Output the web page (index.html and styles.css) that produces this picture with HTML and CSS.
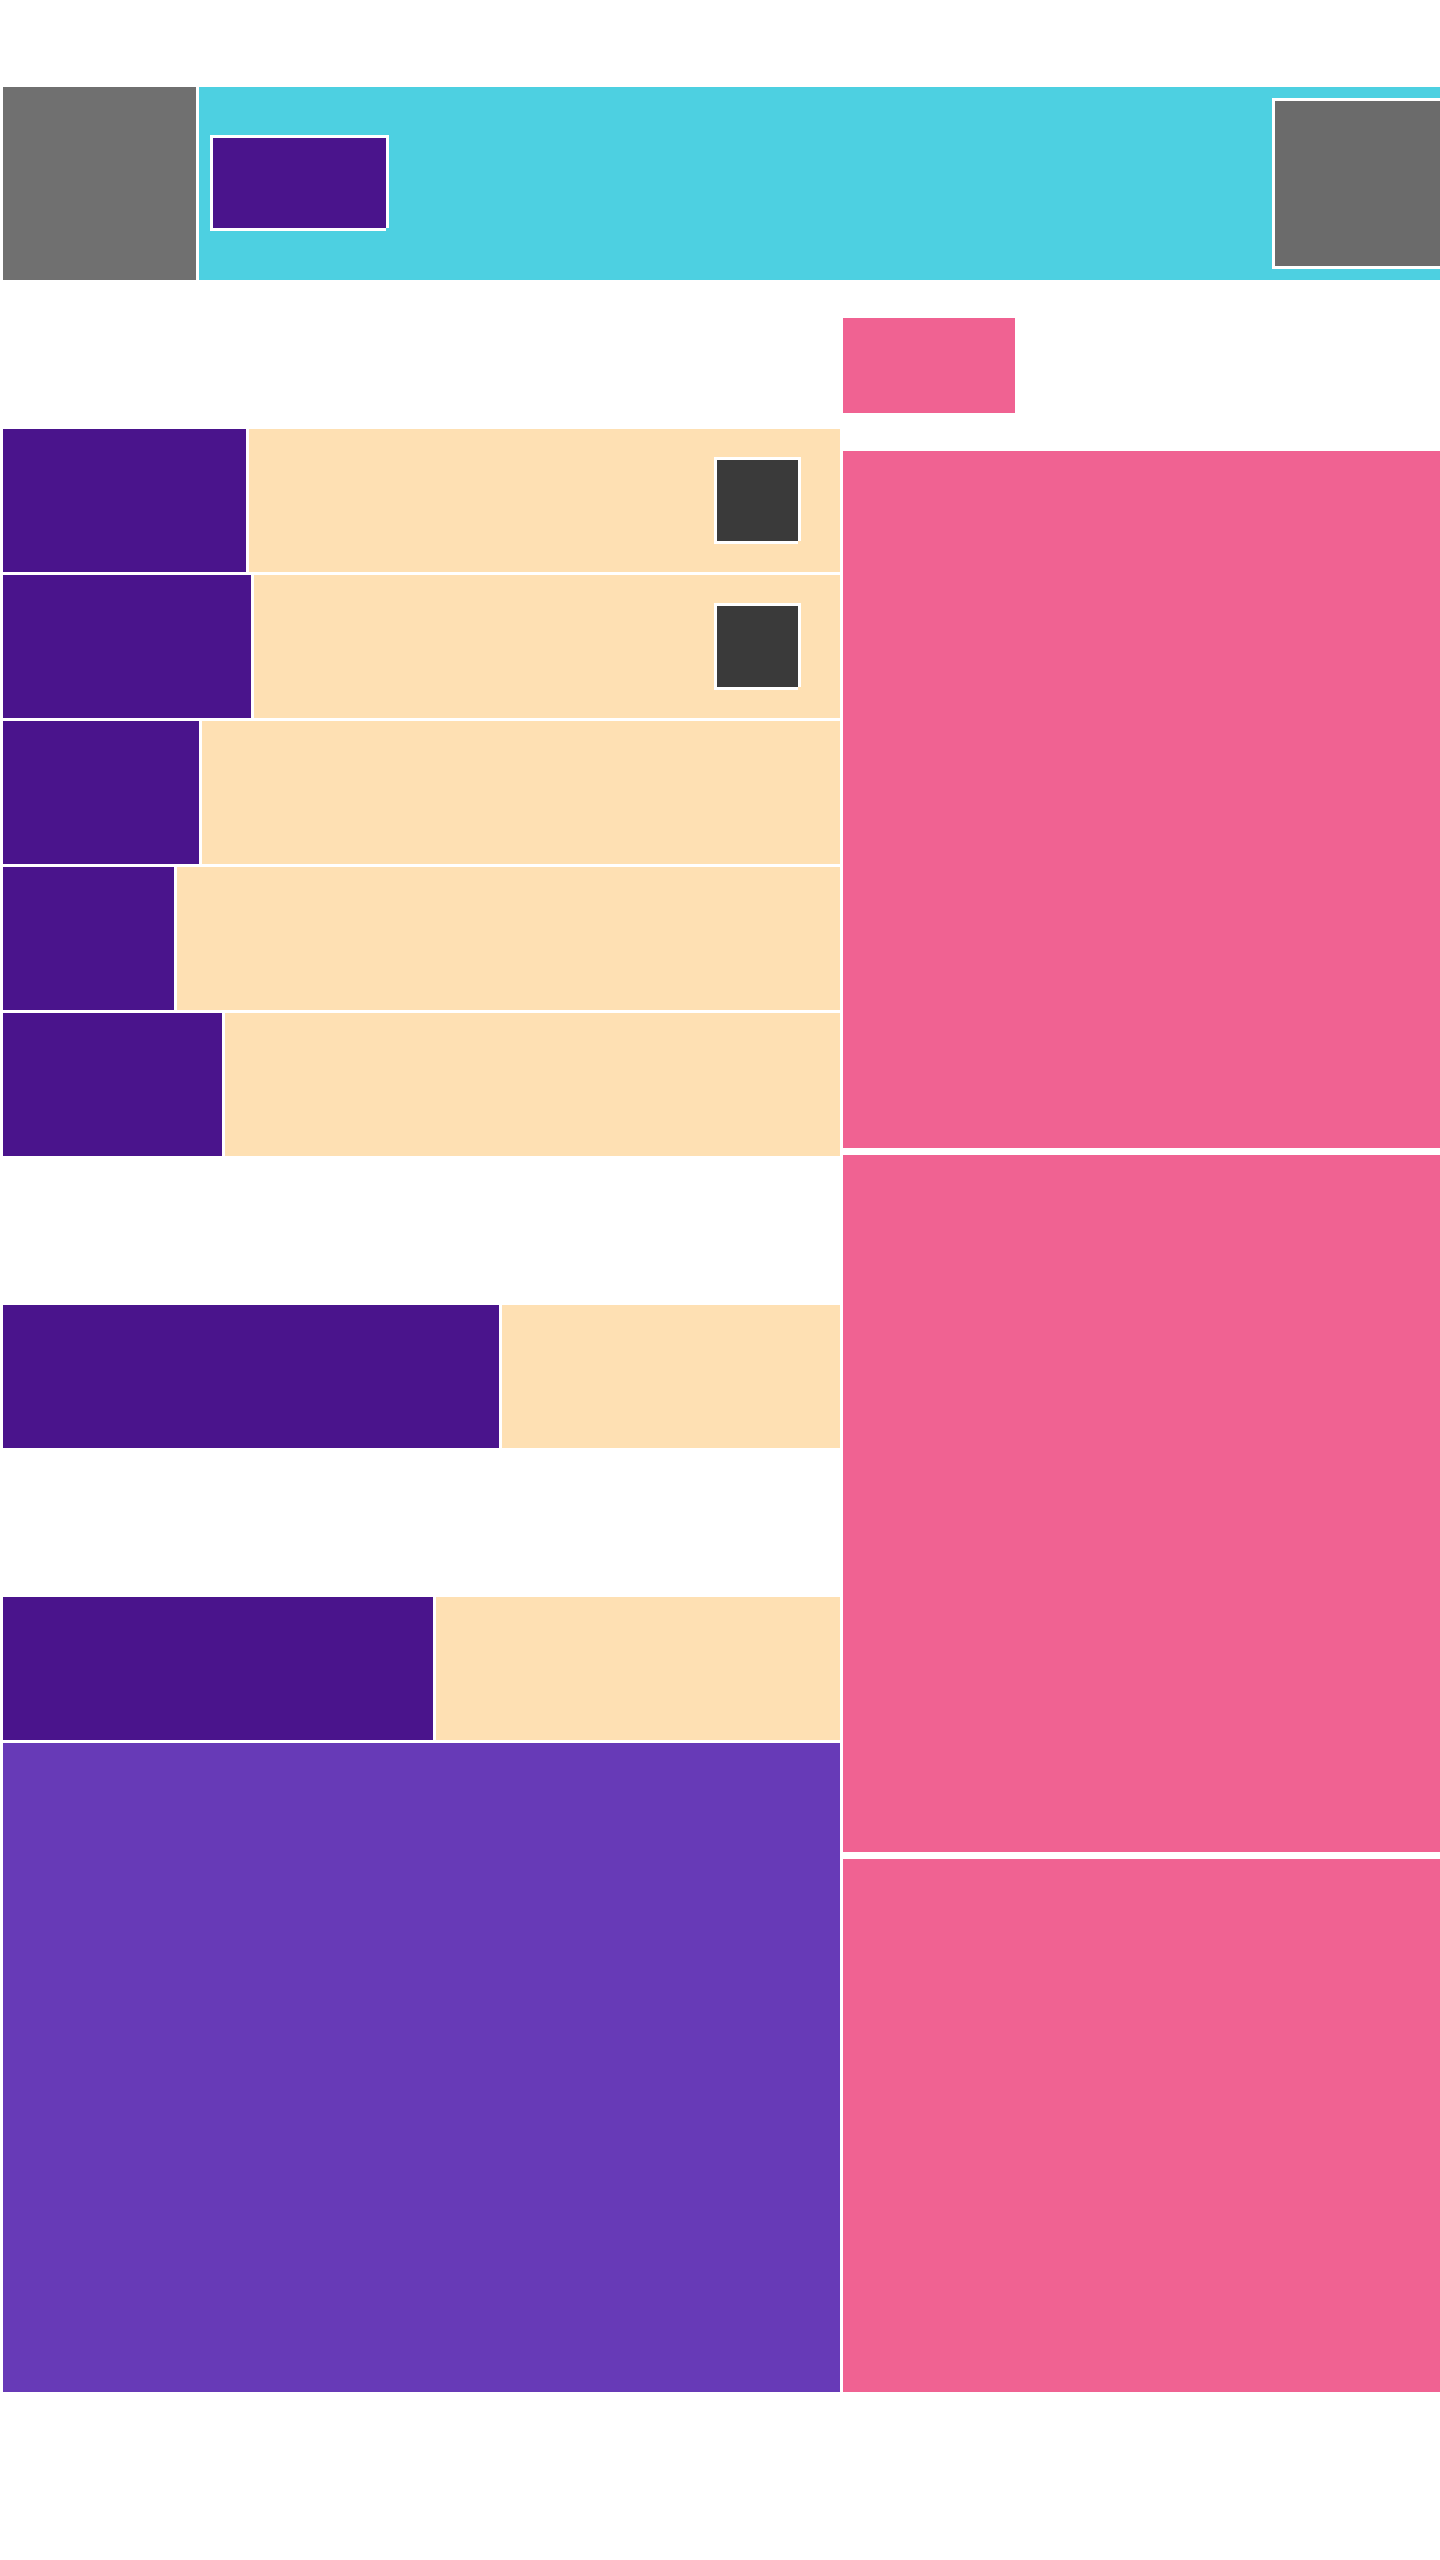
FILE: index.html
```html
<!DOCTYPE html>
<html lang="en">
<head>
<meta charset="utf-8">
<title>Layout</title>
<link rel="stylesheet" href="styles.css">
</head>
<body>
<div class="page">
  <header class="header">
    <div class="logo"></div>
    <div class="bar">
      <div class="btn"></div>
      <div class="avatar"></div>
    </div>
  </header>
  <main class="main">
    <section class="left">
      <div class="row"><div class="label w1"></div><div class="cell"><div class="chip"></div></div></div>
      <div class="row"><div class="label w2"></div><div class="cell"><div class="chip"></div></div></div>
      <div class="row"><div class="label w3"></div><div class="cell"></div></div>
      <div class="row"><div class="label w4"></div><div class="cell"></div></div>
      <div class="row"><div class="label w5"></div><div class="cell"></div></div>
      <div class="row spaced"><div class="label w6"></div><div class="cell"></div></div>
      <div class="row spaced"><div class="label w7"></div><div class="cell"></div></div>
      <div class="panel"></div>
    </section>
    <aside class="right">
      <div class="tag"></div>
      <div class="card c1"></div>
      <div class="card c2"></div>
      <div class="card c3"></div>
    </aside>
  </main>
</div>
</body>
</html>
```
FILE: styles.css
```css
html, body {
  margin: 0;
  padding: 0;
  background: #ffffff;
  overflow-x: hidden;
}
.page {
  width: 1437px;
  padding: 87px 0 0 3px;
  font-family: "Liberation Sans", Arial, sans-serif;
}
.header {
  display: flex;
  gap: 3px;
  height: 193px;
}
.logo {
  width: 193px;
  flex: none;
  background: #707070;
}
.bar {
  flex: 1;
  background: #4dd0e1;
  display: flex;
  justify-content: space-between;
  align-items: flex-start;
  padding-left: 11px;
}
.btn {
  box-sizing: border-box;
  width: 176px;
  height: 93px;
  margin-top: 48px;
  background: #4a148c;
  border-left: 3px solid #fff;
  border-top: 3px solid #fff;
  box-shadow: 3px 0 0 #fff, 0 3px 0 #fff;
}
.avatar {
  box-sizing: border-box;
  width: 168px;
  height: 168px;
  margin-top: 11px;
  background: #6b6b6b;
  border-left: 3px solid #fff;
  border-top: 3px solid #fff;
  box-shadow: 3px 0 0 #fff, 0 3px 0 #fff;
}
.main {
  display: flex;
  gap: 3px;
  align-items: flex-start;
}
.left {
  width: 837px;
  flex: none;
  margin-top: 149px;
  display: flex;
  flex-direction: column;
  gap: 3px;
}
.row {
  display: flex;
  gap: 3px;
  height: 143px;
}
.row.spaced {
  margin-top: 146px;
}
.label {
  flex: none;
  background: #4a148c;
}
.w1 { width: 243px; }
.w2 { width: 248px; }
.w3 { width: 196px; }
.w4 { width: 171px; }
.w5 { width: 219px; }
.w6 { width: 496px; }
.w7 { width: 430px; }
.cell {
  flex: 1;
  background: #fee0b3;
  display: flex;
  justify-content: flex-end;
  align-items: flex-start;
  padding: 28px 42px 0 0;
}
.chip {
  box-sizing: border-box;
  width: 84px;
  height: 84px;
  background: #3a3a3a;
  border-left: 3px solid #fff;
  border-top: 3px solid #fff;
  box-shadow: 3px 0 0 #fff, 0 3px 0 #fff;
}
.panel {
  height: 649px;
  background: #673ab7;
}
.right {
  flex: 1;
  margin-top: 38px;
  display: flex;
  flex-direction: column;
}
.tag {
  width: 172px;
  height: 95px;
  background: #f06292;
}
.card {
  background: #f06292;
}
.c1 { margin-top: 38px; height: 697px; }
.c2 { margin-top: 7px; height: 697px; }
.c3 { margin-top: 7px; height: 533px; }
```
